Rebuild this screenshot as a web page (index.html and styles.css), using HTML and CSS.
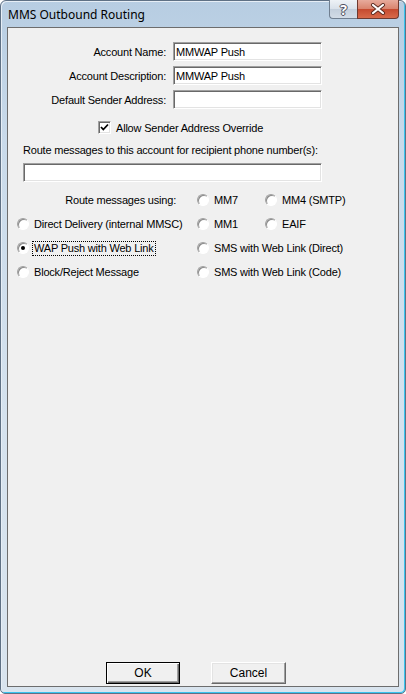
FILE: index.html
```html
<!DOCTYPE html>
<html lang="en">
<head>
    <meta charset="UTF-8">
    <meta name="viewport" content="width=device-width, initial-scale=1.0">
    <title>MMS Outbound Routing</title>
    <link rel="stylesheet" href="styles.css">
</head>
<body>
    <div class="window">
        <div class="titlebar">
            <span class="title">MMS Outbound Routing</span>
            <div class="caption-buttons">
                <span class="cap-btn help">?</span>
                <span class="cap-btn close">
                    <svg width="16" height="12" viewBox="0 0 16 12">
                        <path d="M3 2 L13 10 M13 2 L3 10" stroke="#5a2a20" stroke-width="4" stroke-linecap="round"/>
                        <path d="M3 2 L13 10 M13 2 L3 10" stroke="#fff" stroke-width="2.2" stroke-linecap="round"/>
                    </svg>
                </span>
            </div>
        </div>

        <div class="client">
            <div class="fields">
                <label for="accName">Account Name:</label>
                <input type="text" id="accName" class="edit" value="MMWAP Push">
                <label for="accDesc">Account Description:</label>
                <input type="text" id="accDesc" class="edit" value="MMWAP Push">
                <label for="sender">Default Sender Address:</label>
                <input type="text" id="sender" class="edit" value="">
            </div>

            <div class="check-row">
                <span class="checkbox">
                    <svg width="9" height="9" viewBox="0 0 9 9">
                        <path d="M1 4 L3.3 6.5 L8 1.5" fill="none" stroke="#000" stroke-width="1.8"/>
                    </svg>
                </span>
                <span>Allow Sender Address Override</span>
            </div>

            <div class="route-label">Route messages to this account for recipient phone number(s):</div>
            <input type="text" class="edit wide" value="">

            <div class="route-grid">
                <div class="using">Route messages using:</div>
                <div class="option"><span class="radio"></span><span class="opt-text">MM7</span></div>
                <div class="option"><span class="radio"></span><span class="opt-text">MM4 (SMTP)</span></div>

                <div class="option"><span class="radio"></span><span class="opt-text">Direct Delivery (internal MMSC)</span></div>
                <div class="option"><span class="radio"></span><span class="opt-text">MM1</span></div>
                <div class="option"><span class="radio"></span><span class="opt-text">EAIF</span></div>

                <div class="option"><span class="radio on"></span><span class="opt-text focus">WAP Push with Web Link</span></div>
                <div class="option span2"><span class="radio"></span><span class="opt-text">SMS with Web Link (Direct)</span></div>

                <div class="option"><span class="radio"></span><span class="opt-text">Block/Reject Message</span></div>
                <div class="option span2"><span class="radio"></span><span class="opt-text">SMS with Web Link (Code)</span></div>
            </div>

            <div class="buttons">
                <button class="btn default">OK</button>
                <button class="btn">Cancel</button>
            </div>
        </div>
    </div>
</body>
</html>
```

FILE: styles.css
```css
body {
    margin: 0;
    background-color: #fff;
    font-family: "Liberation Sans", Arial, sans-serif;
    font-size: 11px;
    letter-spacing: -0.2px;
    color: #000;
}
.window {
    width: 406px;
    height: 694px;
    box-sizing: border-box;
    border: 1px solid #5f7185;
    border-radius: 6px 6px 5px 5px;
    background: linear-gradient(180deg, #b7cde2 0%, #c9daea 20%, #d5e2ee 60%, #d9e4ee 100%);
    box-shadow: inset -1px -1px 0 #39c4ef, inset 1px 1px 0 #e6eef6;
    display: flex;
    flex-direction: column;
}
.titlebar {
    height: 26px;
    display: flex;
    align-items: flex-start;
}
.title {
    padding-left: 7px;
    line-height: 27px;
    font-family: "Noto Sans", "Open Sans", sans-serif;
    font-size: 12px;
    letter-spacing: 0;
}
.caption-buttons {
    margin-left: auto;
    margin-right: 6px;
    display: flex;
    margin-top: -1px;
}
.cap-btn {
    height: 19px;
    box-sizing: border-box;
    display: flex;
    align-items: center;
    justify-content: center;
}
.help {
    width: 28px;
    border: 1px solid #707f90;
    border-top: none;
    border-right: none;
    border-radius: 0 0 0 4px;
    background: linear-gradient(180deg, #eef2f6 0%, #d9e1ea 50%, #c3cfdc 51%, #d2dce6 100%);
    color: #fff;
    font-family: "Noto Sans", sans-serif;
    font-weight: bold;
    font-size: 14px;
    text-shadow: 0 0 1px #334, 1px 0 0 #556, -1px 0 0 #556, 0 1px 0 #556, 0 -1px 0 #556;
}
.close {
    width: 42px;
    border: 1px solid #6e3a30;
    border-top: none;
    border-radius: 0 0 4px 0;
    background: linear-gradient(180deg, #e7ab9c 0%, #d9836d 50%, #c54a2f 51%, #d86a4a 100%);
}
.client {
    flex: 1;
    margin: 0 6px 6px 6px;
    border: 1px solid #6d6d6d;
    background-color: #f0f0f0;
    display: flex;
    flex-direction: column;
}
.fields {
    display: grid;
    grid-template-columns: 158px 149px;
    column-gap: 7px;
    row-gap: 5px;
    margin-top: 14px;
}
.fields label {
    text-align: right;
    align-self: center;
}
.edit {
    height: 19px;
    box-sizing: border-box;
    margin: 0;
    padding: 0 2px;
    border: 1px solid;
    border-color: #a0a0a0 #ffffff #ffffff #a0a0a0;
    box-shadow: inset 1px 1px 0 #696969, inset -1px -1px 0 #e3e3e3;
    background-color: #fff;
    font-family: "Liberation Sans", Arial, sans-serif;
    font-size: 11px;
    letter-spacing: -0.2px;
    color: #000;
    outline: none;
}
.edit.wide {
    width: 299px;
    margin-left: 15px;
    margin-top: 6px;
}
.check-row {
    display: flex;
    align-items: center;
    gap: 5px;
    margin: 12px 0 0 90px;
    height: 13px;
}
.checkbox {
    width: 13px;
    height: 13px;
    box-sizing: border-box;
    border: 1px solid;
    border-color: #a0a0a0 #fff #fff #a0a0a0;
    box-shadow: inset 1px 1px 0 #696969, inset -1px -1px 0 #e3e3e3;
    background-color: #fff;
    display: flex;
    align-items: center;
    justify-content: center;
}
.route-label {
    margin: 10px 0 0 15px;
    line-height: 13px;
}
.route-grid {
    display: grid;
    grid-template-columns: 180px 68px 1fr;
    grid-auto-rows: 24px;
    margin-top: 6px;
    padding-left: 9px;
}
.using {
    align-self: center;
    text-align: right;
    padding-right: 21px;
}
.option {
    display: flex;
    align-items: center;
}
.span2 {
    grid-column: span 2;
}
.radio {
    width: 12px;
    height: 12px;
    box-sizing: border-box;
    border-radius: 50%;
    border: 1px solid;
    border-color: #a0a0a0 #fff #fff #a0a0a0;
    box-shadow: inset 1px 1px 0 #8a8a8a;
    background-color: #fff;
    position: relative;
    margin-right: 3px;
}
.radio.on::after {
    content: "";
    position: absolute;
    left: 3px;
    top: 3px;
    width: 4px;
    height: 4px;
    border-radius: 50%;
    background-color: #000;
}
.opt-text {
    border: 1px dotted transparent;
    padding: 0 1px;
    line-height: 13px;
}
.opt-text.focus {
    border-color: #000;
}
.buttons {
    margin-top: auto;
    margin-bottom: 2px;
    display: flex;
    gap: 31px;
    padding-left: 98px;
}
.btn {
    width: 74px;
    height: 22px;
    box-sizing: border-box;
    margin: 0;
    padding: 0;
    border: 1px solid;
    border-color: #fff #696969 #696969 #fff;
    box-shadow: inset -1px -1px 0 #a0a0a0, inset 1px 1px 0 #e3e3e3;
    background-color: #f0f0f0;
    font-family: "Liberation Sans", Arial, sans-serif;
    font-size: 12px;
    color: #000;
}
.btn.default {
    border-color: #000;
    box-shadow: inset 1px 1px 0 #fff, inset -1px -1px 0 #696969, inset -2px -2px 0 #a0a0a0;
}
.btn + .btn {
    width: 75px;
}
```
